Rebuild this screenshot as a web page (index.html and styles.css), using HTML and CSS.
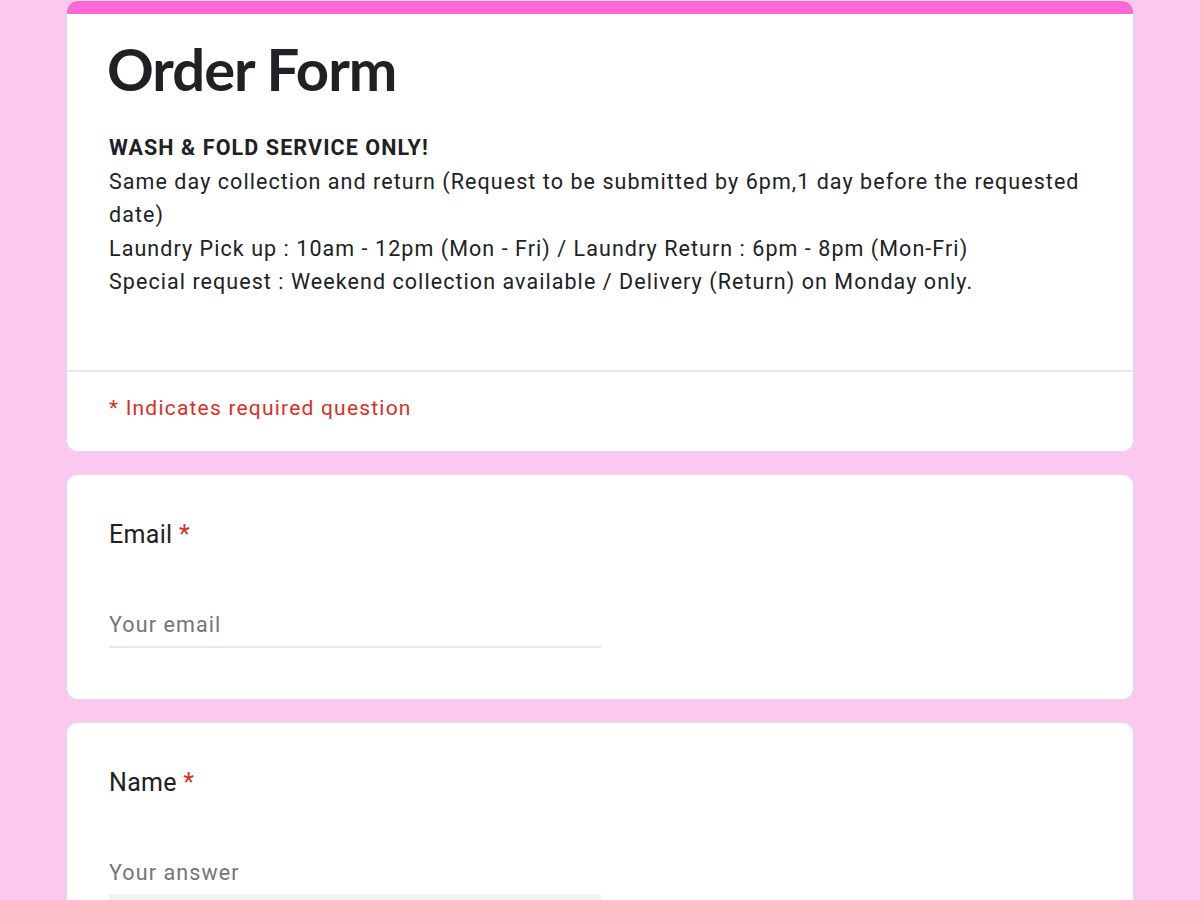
FILE: index.html
```html
<!DOCTYPE html>
<html lang="en">
<head>
<meta charset="utf-8">
<title>Order Form</title>
<link rel="stylesheet" href="styles.css">
</head>
<body>
<main class="form">
  <section class="card header-card">
    <div class="accent"></div>
    <div class="header-body">
      <h1 class="title">Order Form</h1>
      <div class="description">
        <p class="strong">WASH &amp; FOLD SERVICE ONLY!</p>
        <p>Same day collection and return (Request to be submitted by 6pm,1 day before the requested date)</p>
        <p>Laundry Pick up : 10am - 12pm (Mon - Fri) / Laundry Return : 6pm - 8pm (Mon-Fri)</p>
        <p>Special request : Weekend collection available / Delivery (Return) on Monday only.</p>
      </div>
    </div>
    <div class="required-note">* Indicates required question</div>
  </section>

  <section class="card question">
    <div class="label">Email <span class="star">*</span></div>
    <div class="field">
      <span class="placeholder">Your email</span>
    </div>
  </section>

  <section class="card question">
    <div class="label">Name <span class="star">*</span></div>
    <div class="field field-hover">
      <span class="placeholder">Your answer</span>
    </div>
  </section>
</main>
</body>
</html>
```
FILE: styles.css
```css
html, body {
  margin: 0;
  padding: 0;
}

body {
  background: #fbc8ef;
  font-family: Roboto, "Liberation Sans", sans-serif;
  color: #202124;
  overflow: hidden;
  height: 900px;
}

.form {
  width: 1068px;
  margin: 0 0 0 66px;
  display: flex;
  flex-direction: column;
  gap: 22px;
}

.card {
  background: #fff;
  border: 1px solid #e6dbe3;
  border-radius: 12px;
  box-sizing: border-box;
}

.header-card {
  overflow: hidden;
}

.accent {
  height: 13px;
  background: #fd67d6;
}

.header-body {
  padding: 25px 42px 71px;
  border-bottom: 2px solid #e8e8ea;
}

.title {
  margin: 0;
  margin-left: -2px;
  font-family: Lato, sans-serif;
  font-weight: 700;
  font-size: 58px;
  line-height: 60px;
  letter-spacing: -1px;
  color: #202124;
}

.description {
  margin-top: 32px;
  font-size: 21.5px;
  line-height: 33.5px;
  letter-spacing: 1.06px;
}

.description p {
  margin: 0;
}

.description .strong {
  font-weight: 700;
  letter-spacing: 1.1px;
}

.required-note {
  padding: 21px 42px 28px;
  font-size: 21px;
  line-height: 30px;
  letter-spacing: 1.2px;
  color: #d93025;
}

.question {
  padding: 42px 42px 0;
  height: 226px;
}

.label {
  font-size: 25px;
  line-height: 36px;
  letter-spacing: 0.3px;
}

.star {
  color: #d93025;
}

.field {
  width: 492px;
  margin-top: 57px;
  padding-bottom: 6px;
  border-bottom: 2px solid #e9e9eb;
}

.field-hover {
  border-bottom: 6px solid #f1f1f2;
}

.placeholder {
  font-size: 21.5px;
  line-height: 30px;
  letter-spacing: 1.1px;
  color: #70757a;
}
```
